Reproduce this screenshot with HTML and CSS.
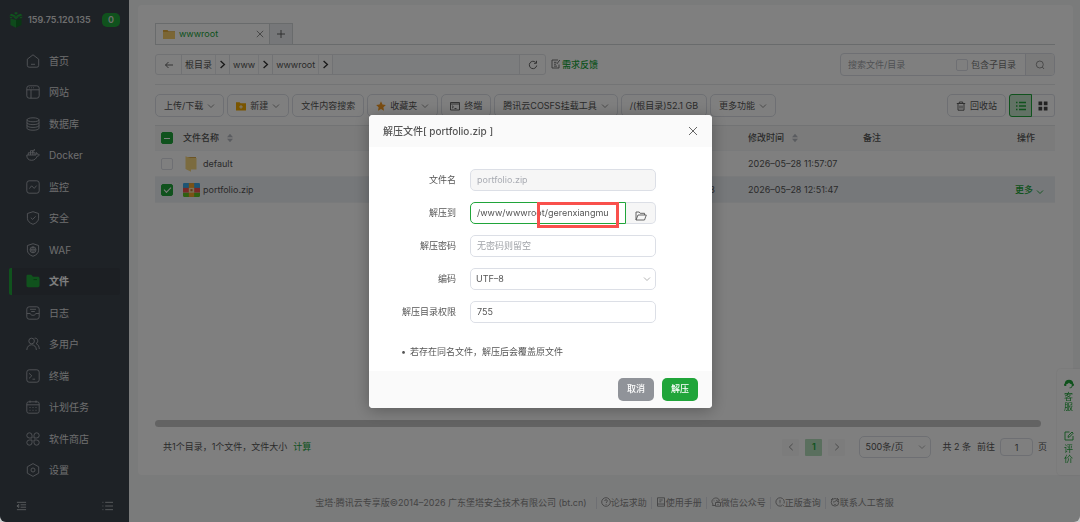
FILE: index.html
```
<!DOCTYPE html>
<html lang="zh-CN">
<head>
  <meta charset="UTF-8" />
  <meta name="viewport" content="width=device-width, initial-scale=1.0" />
  <title>文件</title>
  <link rel="stylesheet" href="styles.css">
</head>
<body>
  <svg class="defs" aria-hidden="true">
    <symbol id="down" viewBox="0 0 8 8"><path d="M1 2.5l3 3 3-3" /></symbol>
    <symbol id="right" viewBox="0 0 8 8"><path d="M2.3 .8L5.7 4 2.3 7.2" /></symbol>
    <symbol id="close" viewBox="0 0 10 10"><path d="M1 1l8 8M9 1l-8 8" /></symbol>
    <symbol id="sort" viewBox="0 0 8 10"><path d="M4 .8L7 4.3H1zM4 9.2L1 5.7h6z" /></symbol>
  </svg>

  <div class="app">
    <aside class="sidebar">
      <div class="server">
        <svg class="logo" viewBox="0 0 14 16">
          <path fill="#1d9436" d="M1.5 6.500L7 8v7.800L1.500 13z" />
          <path fill="#136c26" d="M12.500 6.500L7 8v7.800l5.500-2.800z" />
          <path fill="#20a53a" d="M2.5 1.8L6.6 3.4 4.4 4.8.4 3.2zM11.5 1.8L7.4 3.4l2.2 1.4 4-1.6zM4.4 5l2.3-1.2L7 7.500zM9.6 5L7.3 3.8 7 7.500zM7 0l2 1-2 1.7L5 1zM.2 4.7L3.6 5 2 6.5zM13.8 4.7l-3.4.3L12 6.5z" />
        </svg>
        <strong>159.75.120.135</strong>
        <span class="badge">0</span>
      </div>
      <nav class="menu">
        <a href="#"><svg viewBox="0 0 14 14"><path d="M1.3 5.2L7 .8l5.7 4.4v6.2a1.8 1.8 0 0 1-1.8 1.8H3.1a1.8 1.8 0 0 1-1.8-1.8zM5 10.3h4" /></svg>首页</a>
        <a href="#"><svg viewBox="0 0 14 14"><rect x=".8" y=".8" width="12.4" height="12.4" rx="2.4" /><path d="M.8 4.8h12.4M5 4.8v8.4M3 2.8h.8M5 2.8h.8M7 2.8h.8" /></svg>网站</a>
        <a href="#"><svg viewBox="0 0 14 14"><ellipse cx="7" cy="2.8" rx="6" ry="2" /><path d="M1 2.8v8.4c0 2.7 12 2.7 12 0V2.8M1 5.6c0 2.7 12 2.7 12 0M1 8.4c0 2.7 12 2.7 12 0" /></svg>数据库</a>
        <a href="#"><svg viewBox="0 0 14 14"><path d="M.8 7h9c.8-.4.9-1.500.5-2.500 1 .5 1.400 1.200 1.400 1.900.6-.1 1.300 0 1.800.4-.5 1-1.300 1.300-2.300 1.300C10.200 10.800 8.300 12.300 5.500 12.300 2.500 12.300.6 10.300.8 7zM2.300 7V4.800h6.800V7M4.500 7V2.700h2.300V7M6.800 4.800V2.700h1.500V1" /></svg>Docker</a>
        <a href="#"><svg viewBox="0 0 14 14"><rect x=".8" y=".8" width="12.4" height="12.4" rx="2.4" /><path d="M3.4 8.6l2.2-2.8 2.6 2.6 2.4-2.8" /></svg>监控</a>
        <a href="#"><svg viewBox="0 0 14 14"><path d="M7 .7l5.6 1.8v4.8c0 2.6-2.2 4.8-5.6 6-3.4-1.2-5.6-3.400-5.600-6V2.500zM4.800 6.700l1.800 1.700 3-3" /></svg>安全</a>
        <a href="#"><svg viewBox="0 0 14 14"><path d="M7 .7l5.600 1.800v4.800c0 2.600-2.200 4.800-5.600 6-3.400-1.200-5.600-3.400-5.600-6V2.500z" /><circle cx="7" cy="6.800" r="3" /><path d="M4 6.800h6M7 3.800c-1.600 1.800-1.600 4.200 0 6 1.600-1.800 1.600-4.200 0-6" /></svg>WAF</a>
        <a href="#" class="active"><svg viewBox="0 0 14 14"><path class="fill" d="M.5 2.2C.5 1.3 1.200.800 2 .800h3.200l1.800 2h5c.8 0 1.500.600 1.500 1.500v7.200c0 1-.7 1.700-1.700 1.700H2.200c-1 0-1.700-.7-1.700-1.700z" /><path class="notch" d="M7.500 5.600h3.500" /></svg>文件</a>
        <a href="#"><svg viewBox="0 0 14 14"><rect x=".8" y=".8" width="12.4" height="12.4" rx="2.4" /><path d="M.8 7.5h3.400c.4 2.400 5.200 2.400 5.600 0h3.400M4 3.300h6M5.200 5.500h3.600" /></svg>日志</a>
        <a href="#"><svg viewBox="0 0 14 14"><circle cx="5.6" cy="4" r="2.8" /><path d="M.8 13c.2-7 9.400-7 9.600 0M8.600 1.200c3.600-.6 4.200 4.300 1.400 5.300 2.200.9 3.200 3.100 3.300 5.500" /></svg>多用户</a>
        <a href="#"><svg viewBox="0 0 14 14"><rect x=".8" y=".8" width="12.4" height="12.4" rx="2.4" /><path d="M3 4.3l2.800 2.500L3 9.400M6.500 10.200h2.600" /></svg>终端</a>
        <a href="#"><svg viewBox="0 0 14 14"><rect x=".8" y="1.8" width="12.4" height="11.4" rx="2" /><path d="M.8 4.8h12.400M4 .5v2.300M10 .5v2.300M3.500 7.500h1M6.500 7.500h1M9.500 7.500h1M3.500 10.300h1M6.500 10.300h1M9.500 10.300h1" /></svg>计划任务</a>
        <a href="#"><svg viewBox="0 0 14 14"><path d="M6 6H3.300A2.600 2.600 0 1 1 6 3.300zM8 6h2.700A2.600 2.600 0 1 0 8 3.300zM6 8H3.300A2.600 2.600 0 1 0 6 10.700zM8 8h2.700A2.600 2.600 0 1 1 8 10.700z" /></svg>软件商店</a>
        <a href="#"><svg viewBox="0 0 14 14"><path d="M7 .6l5.700 3.200v6.400L7 13.400l-5.700-3.200V3.800z" /><circle cx="7" cy="7" r="2" /></svg>设置</a>
      </nav>
      <div class="sidebar-foot">
        <button type="button" aria-label="收起"><svg viewBox="0 0 12 10"><path d="M1 1h10M5 3.700h6M5 6.300h6M1 9h10M3 3.300L1 5l2 1.700z" /></svg></button>
        <button type="button" aria-label="菜单"><svg viewBox="0 0 12 10"><path d="M3.500 1h8.500M3.500 5h8.500M3.500 9h8.500M.5 1h1M.5 5h1M.5 9h1" /></svg></button>
      </div>
    </aside>

    <div class="main">
      <main class="card">
        <div class="tabs">
          <div class="tab">
            <svg class="folder" viewBox="0 0 12 10"><path fill="#e2ad3e" d="M0 1h4.500l1 1.200H12V10H0z" /><path fill="#f6cd6a" d="M0 3h12v7H0z" /></svg>
            <span>wwwroot</span>
            <button type="button" aria-label="关闭标签"><svg class="line"><use href="#close" /></svg></button>
          </div>
          <button class="tab-add" type="button" aria-label="新标签"><svg class="line" viewBox="0 0 10 10"><path d="M5 1v8M1 5h8" /></svg></button>
        </div>

        <div class="path-row">
          <div class="path">
            <button class="back" type="button" aria-label="返回"><svg class="line" viewBox="0 0 10 10"><path d="M9 5H1.500M4.500 2l-3 3 3 3" /></svg></button>
            <a href="#">根目录</a><svg class="line sep"><use href="#right" /></svg>
            <a href="#">www</a><svg class="line sep"><use href="#right" /></svg>
            <a href="#">wwwroot</a><svg class="line sep"><use href="#right" /></svg>
            <span class="path-rest"></span>
            <button class="refresh" type="button" aria-label="刷新"><svg class="line" viewBox="0 0 10 10"><path d="M8.700 5.500a3.700 3.700 0 1 1-1-3.100M8.500.8v2.500H6" /></svg></button>
          </div>
          <a class="feedback" href="#"><svg class="line" viewBox="0 0 10 10"><path d="M7 1H1v8h7V5.500M3 3.300h2.500M3 5.200h2M3 7.100h3M5.800 5l3-4" /></svg>需求反馈</a>
          <div class="search">
            <input type="text" placeholder="搜索文件/目录" aria-label="搜索文件/目录">
            <label><input type="checkbox">包含子目录</label>
            <button type="button" aria-label="搜索"><svg class="line" viewBox="0 0 10 10"><circle cx="4.8" cy="4.5" r="3.5" /><path d="M7.300 7l1.700 2" /></svg></button>
          </div>
        </div>

        <div class="toolbar">
          <button type="button">上传/下载<svg class="line down"><use href="#down" /></svg></button>
          <button type="button"><svg viewBox="0 0 11 10"><path fill="#f5ab00" d="M0 1h4l1 1h6v8H0z" /><path stroke="#fff" d="M5.500 4v4M3.500 6h4" /></svg>新建<svg class="line down"><use href="#down" /></svg></button>
          <button type="button">文件内容搜索</button>
          <button type="button"><svg viewBox="0 0 10 10"><path fill="#f59a23" d="M5 .3l1.500 3.100 3.400.5-2.500 2.400.6 3.400L5 8.100 2 9.700l.6-3.400L.1 3.900l3.400-.5z" /></svg>收藏夹<svg class="line down"><use href="#down" /></svg></button>
          <button type="button"><svg class="line" viewBox="0 0 10 10"><path d="M.5 1.500h9v7.500h-9zM.5 3h9M2 4.700l1.500 1.200L2 7.200M4.500 7.500h2" /></svg>终端</button>
          <button type="button">腾讯云COSFS挂载工具<svg class="line down"><use href="#down" /></svg></button>
          <button type="button">/(根目录)52.1 GB</button>
          <button type="button">更多功能<svg class="line down"><use href="#down" /></svg></button>
          <button class="recycle" type="button"><svg class="line" viewBox="0 0 10 10"><path d="M.8 2.500h8.400M3.300 2.300V1h3.400v1.300M2 2.700V9.200h6V2.700M4 4.500v3M6 4.500v3" /></svg>回收站</button>
          <div class="view">
            <button class="on" type="button" aria-label="列表"><svg viewBox="0 0 10 10"><path d="M3 1.500h7M3 5h7M3 8.500h7M0 1.500h1.500M0 5h1.500M0 8.500h1.500" /></svg></button>
            <button type="button" aria-label="图标"><svg viewBox="0 0 10 10"><path class="tiles" d="M.5.5h3.700v3.700H.5zM5.800.5h3.700v3.700H5.800zM.5 5.800h3.700v3.700H.5zM5.800 5.800h3.700v3.700H5.800z" /></svg></button>
          </div>
        </div>

        <table class="files">
          <colgroup><col class="c-check"><col><col class="c-size"><col class="c-time"><col class="c-note"><col class="c-ops"></colgroup>
          <thead>
            <tr>
              <th><input type="checkbox" class="some" checked aria-label="全选"></th>
              <th>文件名称<svg class="sort"><use href="#sort" /></svg></th>
              <th></th>
              <th>修改时间<svg class="sort"><use href="#sort" /></svg></th>
              <th>备注</th>
              <th class="ops">操作</th>
            </tr>
          </thead>
          <tbody>
            <tr>
              <td><input type="checkbox" aria-label="default"></td>
              <td><div class="name"><svg viewBox="0 0 16 16"><path fill="#d9a94a" d="M3 1h9.500v12H3z" /><path fill="#f7d67f" d="M2 .3l5.500 2v13.400L2 13zM9 2h4v11.500H7.500V2z" /></svg>default</div></td>
              <td></td>
              <td>2026–05–28 11:57:07</td>
              <td></td>
              <td></td>
            </tr>
            <tr class="selected">
              <td><input type="checkbox" checked aria-label="portfolio.zip"></td>
              <td><div class="name"><svg viewBox="0 0 16 14"><path fill="#3aa9e8" d="M0 1.500Q0 .5 1 .5h14q1 0 1 1V5H0z" /><path fill="#f0504c" d="M0 5h16v4.500H0z" /><path fill="#5fc022" d="M0 9.500h16v3q0 1-1 1H1q-1 0-1-1z" /><path fill="#f5a52c" d="M5.500.5h5v13h-5z" /><path fill="#f6e3b0" d="M5.500 5h5v4.500h-5z" /><path fill="#c5722a" d="M7 6.200h2v2H7z" /></svg>portfolio.zip</div></td>
              <td class="size">B</td>
              <td>2026–05–28 12:51:47</td>
              <td></td>
              <td class="ops"><a href="#">更多<svg class="line down"><use href="#down" /></svg></a></td>
            </tr>
          </tbody>
        </table>

        <div class="scrollbar"></div>

        <div class="pager">
          <span>共1个目录，1个文件，文件大小</span>
          <a href="#">计算</a>
          <div class="pages">
            <button type="button" aria-label="上一页"><svg class="line flip"><use href="#right" /></svg></button>
            <button class="current" type="button">1</button>
            <button type="button" aria-label="下一页"><svg class="line"><use href="#right" /></svg></button>
          </div>
          <div class="select page-size">
            <select aria-label="每页条数"><option>500条/页</option></select>
            <svg class="line down"><use href="#down" /></svg>
          </div>
          <span>共 2 条</span>
          <label>前往<input type="text" value="1">页</label>
        </div>
      </main>

      <footer class="footer">
        <span>宝塔·腾讯云专享版©2014–2026 广东堡塔安全技术有限公司 (bt.cn)</span>
        <a href="#"><svg class="line" viewBox="0 0 10 10"><circle cx="5" cy="5" r="4.3" /><path d="M3.700 4c0-1.800 2.700-1.700 2.700 0 0 .9-1.300 1-1.300 2M5.100 7v.8" /></svg>论坛求助</a>
        <a href="#"><svg class="line" viewBox="0 0 10 10"><path d="M1.500.8h7v8.400h-7zM1.500 7h7M3.300 3h3.400M3.300 4.800h2" /></svg>使用手册</a>
        <a href="#"><svg class="line" viewBox="0 0 10 10"><path d="M4 8.500H1.500L2 7C-1 3.500 3 .5 5.500 1 7.500 1.300 8.500 2.800 8.400 4M3 3.500v.8M5.700 3v.8M4.500 5.500h5v3.700h-5zM5.800 5.500c0-2 2.500-2 2.500 0M7 7v1" /></svg>微信公众号</a>
        <a href="#"><svg class="line" viewBox="0 0 10 10"><path d="M7 8.700A4.200 4.200 0 1 1 9 6.500M9 9.300L7.300 7.500M5 2.800v3M5 6.700v.6" /></svg>正版查询</a>
        <a href="#"><svg class="line" viewBox="0 0 10 10"><circle cx="5" cy="5.3" r="3.800" /><path d="M1 3L3 1M9 3L7 1M3 5c2 0 3-1 3.500-2 .3 1 .8 1.700 1.500 2M3.800 7c.8.7 1.600.7 2.400 0" /></svg>联系人工客服</a>
      </footer>
    </div>

    <div class="float">
      <a href="#"><svg viewBox="0 0 10 10"><path fill="#20a53a" d="M5 .8c2.600 0 4.200 1.700 4.200 3.600.6.2.8.7.8 1.300 0 .8-.5 1.300-1.300 1.300C8.200 8.500 7 9.300 5.500 9.300V8.500c1 0 1.800-.5 2.200-1.500V5.300C6.500 5 5.600 4.500 5 3.800 4.300 4.600 3.300 5 2.300 5.200V7H1.300C.5 7 0 6.500 0 5.700c0-.6.3-1.100.8-1.300C.8 2.500 2.400.8 5 .8z" /></svg><span>客服</span></a>
      <a href="#"><svg class="line" viewBox="0 0 10 10"><path d="M9 5v4H1V1h4.500M4 6.300l.3-1.600L8 1l1.200 1.200L5.500 6z" /></svg><span>评价</span></a>
    </div>
  </div>

  <div class="mask">
    <form class="modal" role="dialog" aria-labelledby="title">
      <header>
        <h1 id="title">解压文件[ portfolio.zip ]</h1>
        <button type="button" aria-label="关闭"><svg class="line"><use href="#close" /></svg></button>
      </header>
      <div class="fields">
        <label for="file">文件名</label>
        <input id="file" type="text" value="portfolio.zip" disabled>
        <label for="target">解压到</label>
        <div class="target">
          <input id="target" type="text" value="/www/wwwroot/gerenxiangmu">
          <button type="button" aria-label="选择目录"><svg class="line" viewBox="0 0 12 10"><path d="M1 9V1h3.200l1 1.300H9.500V4M1 9h8.500L11.300 4H3z" /></svg></button>
          <span class="mark"></span>
        </div>
        <label for="password">解压密码</label>
        <input id="password" type="text" placeholder="无密码则留空">
        <label for="encoding">编码</label>
        <div class="select">
          <select id="encoding"><option>UTF–8</option></select>
          <svg class="line down"><use href="#down" /></svg>
        </div>
        <label for="mode">解压目录权限</label>
        <input id="mode" type="text" value="755">
      </div>
      <ul>
        <li>若存在同名文件，解压后会覆盖原文件</li>
      </ul>
      <div class="actions">
        <button type="button">取消</button>
        <button class="primary" type="submit">解压</button>
      </div>
    </form>
  </div>
</body>
</html>
```
FILE: styles.css
```
* {
  box-sizing: border-box;
}
html {
  background: #ccc;
}
body {
  margin: 0;
  font: 9px/12px Inter, "Noto Sans CJK SC", sans-serif;
  color: #555;
}
a {
  color: inherit;
  text-decoration: none;
}
button, input, select {
  font: inherit;
  color: inherit;
  margin: 0;
  padding: 0;
  border: 0;
  background: none;
  outline: 0;
}
button {
  display: inline-flex;
  align-items: center;
  justify-content: center;
}
svg {
  width: 10px;
  height: 10px;
  flex: none;
  fill: none;
}
.defs {
  position: absolute;
  width: 0;
  height: 0;
}
.line {
  stroke: currentColor;
  stroke-width: 0.9;
}
.down {
  width: 8px;
  height: 8px;
  color: #888;
}
.app {
  display: flex;
  min-height: 100vh;
  background: #f5f6f7;
  border-radius: 0 0 6px 6px;
  overflow: hidden;
}

/* sidebar */
.sidebar {
  display: flex;
  flex-direction: column;
  width: 129px;
  flex: none;
  background: #3c444d;
  color: #ddd;
}
.server {
  display: flex;
  align-items: center;
  height: 40px;
  margin-bottom: 5px;
  padding: 0 9px;
}
.server strong {
  margin-left: 5px;
  font-weight: 600;
}
.logo {
  width: 14px;
  height: 16px;
}
.badge {
  margin-left: auto;
  padding: 1px 6px;
  border-radius: 5px;
  background: #20a53a;
  font-weight: 600;
}
.menu {
  display: flex;
  flex: 1;
  flex-direction: column;
  padding: 0 9px;
  font-size: 10px;
}
.menu a {
  display: flex;
  flex: 1;
  align-items: center;
  gap: 9px;
  margin: 2px 0;
  padding-left: 17px;
}
.menu svg {
  width: 14px;
  height: 14px;
  stroke: #a8adb2;
  stroke-width: 0.9;
}
.menu .active {
  padding-left: 14px;
  border-left: 3px solid #20a53a;
  border-radius: 2px;
  background: #383f47;
  color: #fff;
  font-weight: 600;
}
.menu .fill {
  fill: #20a53a;
  stroke: none;
}
.menu .notch {
  stroke: #136c26;
}
.sidebar-foot {
  display: flex;
  justify-content: space-between;
  height: 36px;
  padding: 4px 16px 0;
}
.sidebar-foot svg {
  width: 11px;
  stroke: #b8bcc0;
}

/* file manager */
.main {
  display: flex;
  flex: 1;
  min-width: 0;
  flex-direction: column;
}
.card {
  display: flex;
  flex: 1;
  flex-direction: column;
  margin: 5px 7px 0 9px;
  padding: 18px 18px 17px 17px;
  border-radius: 4px;
  background: #fff;
}
.tabs {
  display: flex;
  height: 22px;
  border-bottom: 1px solid #d3d6d9;
}
.tab {
  display: flex;
  align-items: center;
  gap: 4px;
  width: 115px;
  padding: 0 5px 0 7px;
  border: 1px solid #d3d6d9;
  border-bottom: 0;
  color: #20a53a;
}
.tab .folder {
  width: 12px;
}
.tab button {
  margin-left: auto;
  color: #666;
}
.tab button svg {
  width: 8px;
  height: 8px;
}
.tab-add {
  width: 23px;
  border: 1px solid #d3d6d9;
  border-width: 1px 1px 0 0;
  background: #eceff3;
}
.path-row {
  display: flex;
  align-items: center;
  padding: 9px 0;
  border-bottom: 1px solid #e6e8ea;
}
.path {
  display: flex;
  align-items: center;
  width: 391px;
  height: 21px;
  border: 1px solid #e3e5e9;
  border-radius: 3px;
}
.path > * {
  height: 19px;
}
.path a {
  padding: 4px 3px 0;
  border-left: 1px solid #e3e5e9;
}
.path .sep {
  width: 14px;
  padding: 5px 2px;
  border-left: 1px solid #e9ebee;
  color: #333;
  stroke-width: 1.2;
}
.back, .refresh {
  width: 25px;
}
.path-rest {
  flex: 1;
  border: 1px solid #e3e5e9;
  border-width: 0 1px;
  background: #f8fafc;
}
.feedback {
  display: flex;
  gap: 1px;
  margin-left: 5px;
  color: #20a53a;
  font-weight: 500;
}
.feedback svg {
  color: #666;
}
.search {
  display: flex;
  width: 215px;
  height: 23px;
  margin: -1px 0 -1px auto;
  border: 1px solid #dcdfe6;
  border-radius: 4px;
  overflow: hidden;
}
.search > input {
  flex: 1;
  min-width: 0;
  padding-left: 7px;
}
.search label {
  display: flex;
  align-items: center;
  gap: 3px;
  padding-right: 9px;
  color: #777;
}
.search button {
  width: 29px;
  border-left: 1px solid #dcdfe6;
  background: #f5f5f5;
  color: #888;
}
::placeholder {
  color: #a0a3a8;
  opacity: 1;
}
input[type="checkbox"] {
  display: block;
  appearance: none;
  width: 12px;
  height: 12px;
  border: 1px solid #dcdfe6;
  border-radius: 2px;
}
input[type="checkbox"]:checked {
  border-color: #20a53a;
  background: #20a53a;
}
input[type="checkbox"]:checked::before {
  content: "";
  display: block;
  width: 6px;
  height: 3px;
  margin: 2px;
  border: solid #fff;
  border-width: 0 0 1px 1px;
  transform: rotate(-45deg);
}
input[type="checkbox"].some:checked::before {
  height: 4px;
  border-width: 0 0 1px;
  margin-top: 1px;
  transform: none;
}
.toolbar {
  display: flex;
  gap: 3px;
  padding: 9px 0 8px;
}
.toolbar > button {
  gap: 4px;
  height: 23px;
  padding: 0 8px;
  border: 1px solid #dcdfe6;
  border-radius: 5px;
  white-space: nowrap;
}
.toolbar .recycle {
  margin-left: auto;
}
.view {
  display: flex;
  height: 23px;
  border: 1px solid #dcdfe6;
  border-radius: 3px;
}
.view button {
  width: 22px;
}
.view svg {
  stroke: #333;
  stroke-width: 1.4;
}
.view .on {
  margin: -1px 0 -1px -1px;
  width: 23px;
  border: 1px solid #20a53a;
  border-radius: 3px 0 0 3px;
  background: #c5e5cb;
}
.view .on svg {
  stroke: #20a53a;
}
.view .tiles {
  fill: #444;
  stroke: none;
}
.files {
  width: 100%;
  table-layout: fixed;
  border-collapse: collapse;
  border-top: 1px solid #e4e6e8;
}
.c-check { width: 28px; }
.c-size { width: 100px; }
.c-time { width: 115px; }
.c-note { width: 130px; }
.c-ops { width: 68px; }
.files th, .files td {
  height: 26px;
  padding: 0 6px;
  border-bottom: 1px solid #f2f4f6;
  text-align: left;
}
.files th {
  height: 25px;
  background: #f7f7f7;
  font-weight: 500;
}
.files th:nth-child(2), .files td:nth-child(2) {
  padding-left: 0;
}
.files .ops {
  padding-right: 20px;
  text-align: right;
}
.files td.ops {
  padding-right: 11px;
  color: #20a53a;
  font-weight: 500;
}
.ops .down {
  margin-left: 3px;
  color: #20a53a;
  vertical-align: -3px;
}
.sort {
  width: 8px;
  margin-left: 7px;
  fill: #b5b9c0;
  vertical-align: -2px;
}
.files .size {
  padding-right: 27px;
  text-align: right;
}
.name {
  display: flex;
  align-items: center;
  gap: 3px;
}
.name svg {
  width: 17px;
  height: 16px;
}
.selected {
  background: #edf1f5;
}
.scrollbar {
  height: 7px;
  margin: auto 14px 9px 0;
  border-radius: 4px;
  background: #c7c7c7;
}
.pager {
  display: flex;
  align-items: center;
  gap: 6px;
  padding-left: 8px;
}
.pager > a {
  color: #20a53a;
}
.pages {
  display: flex;
  gap: 6px;
  margin-left: auto;
}
.pages button {
  width: 17px;
  height: 17px;
  border-radius: 1px;
  background: #f9f9f9;
  color: #888;
}
.pages svg {
  width: 8px;
  height: 8px;
}
.pages .flip {
  transform: scaleX(-1);
}
.pages .current {
  background: #b4dfbc;
  color: #20a53a;
  font-weight: 600;
}
.select {
  display: grid;
  align-items: center;
}
.select > * {
  grid-area: 1 / 1;
}
.select select {
  appearance: none;
  width: 100%;
  height: 22px;
  padding: 0 5px;
  border: 1px solid #dcdfe6;
  border-radius: 5px;
}
.select svg {
  margin-right: 5px;
  justify-self: end;
  color: #aaa;
  pointer-events: none;
}
.page-size {
  width: 72px;
  margin: 0 5px 0 8px;
}
.pager label {
  display: flex;
  align-items: center;
  gap: 5px;
  padding-right: 8px;
}
.pager label input {
  width: 33px;
  height: 18px;
  border: 1px solid #dcdfe6;
  border-radius: 4px;
  text-align: center;
}
.footer {
  display: flex;
  align-items: center;
  justify-content: center;
  height: 47px;
  padding-top: 9px;
  color: #888;
}
.footer > span {
  padding-right: 5px;
}
.footer a {
  display: flex;
  margin-left: 4px;
  padding-left: 4px;
  border-left: 1px solid #dcdfe6;
}
.float {
  position: fixed;
  right: 0;
  bottom: 47px;
  display: flex;
  flex-direction: column;
  gap: 19px;
  width: 23px;
  padding: 10px 6px 11px 7px;
  border-radius: 4px 0 0 4px;
  background: #fff;
  box-shadow: 0 0 2px rgba(0, 0, 0, 0.12);
  color: #20a53a;
  line-height: 10px;
}
.float span {
  display: block;
  margin-top: 3px;
}
.float svg {
  display: block;
}

/* dialog */
.mask {
  position: fixed;
  inset: 0;
  display: flex;
  align-items: center;
  justify-content: center;
  padding-left: 1px;
  border-radius: 0 0 6px 6px;
  background: rgba(0, 0, 0, 0.5);
}
.modal {
  width: 343px;
  border-radius: 4px;
  background: #fff;
  box-shadow: 0 2px 16px rgba(0, 0, 0, 0.3);
  overflow: hidden;
}
.modal header {
  display: flex;
  align-items: center;
  justify-content: space-between;
  height: 32px;
  padding: 0 14px;
  background: #fafafa;
}
h1 {
  margin: 0;
  font-size: 10px;
  font-weight: 500;
}
.fields {
  display: grid;
  grid-template-columns: 87px 186px;
  gap: 11px 14px;
  align-items: center;
  padding: 22px 0 0;
}
.fields > label {
  text-align: right;
}
.fields input {
  width: 100%;
  height: 22px;
  padding: 0 6px;
  border: 1px solid #dcdfe6;
  border-radius: 5px;
}
.fields input:disabled {
  background: #f6f6f6;
  color: #a8abb2;
}
.target {
  position: relative;
  display: flex;
}
.fields .target input {
  flex: 1;
  min-width: 0;
  border-color: #20a53a;
  border-radius: 5px 0 0 5px;
}
.target button {
  align-items: flex-end;
  width: 30px;
  padding-bottom: 2px;
  border: 1px solid #dcdfe6;
  border-left: 0;
  border-radius: 0 5px 5px 0;
  background: #f6f6f6;
}
.target svg {
  width: 12px;
}
/* red frame round the sub-directory */
.mark {
  position: absolute;
  top: 0;
  left: 67px;
  width: 82px;
  height: 26px;
  border: 3px solid #f9504c;
}
.modal ul {
  margin: 23px 0 13px;
  padding-left: 32px;
  list-style: none;
}
.modal li {
  display: flex;
  gap: 4px;
}
.modal li::before {
  content: "•";
}
.actions {
  display: flex;
  gap: 8px;
  justify-content: flex-end;
  padding: 7px 14px;
  background: #fafafa;
}
.actions button {
  width: 36px;
  height: 23px;
  border-radius: 5px;
  background: #909399;
  color: #fff;
  font-weight: 500;
}
.actions .primary {
  background: #20a53a;
}
```
